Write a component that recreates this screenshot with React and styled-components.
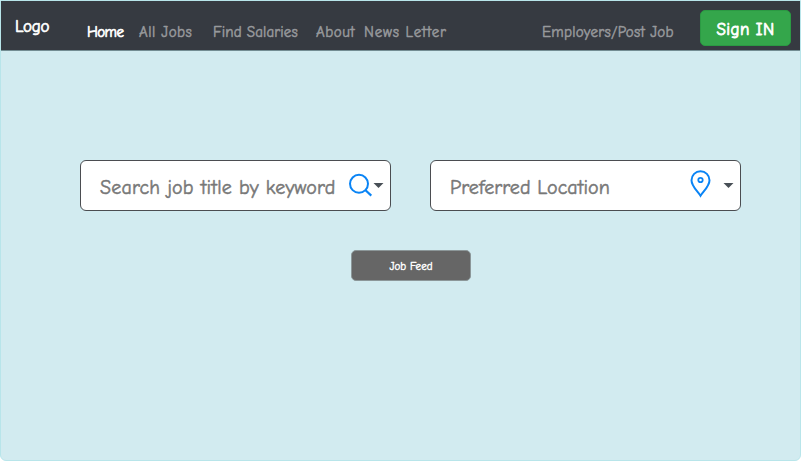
import React from "react";
import styled, { createGlobalStyle } from "styled-components";

const Global = createGlobalStyle`
  * { box-sizing: border-box; }
  body { margin: 0; background: #fff; }
`;

const Page = styled.main`
  width: 801px;
  height: 461px;
  border: 1px solid #b8e5ea;
  border-radius: 0 0 6px 6px;
  background: #d2ebf0;
  font-family: "Comic Neue", "Comic Sans MS", "Open Sans", sans-serif;
  overflow: hidden;
`;

const NavBar = styled.header`
  display: flex;
  align-items: flex-start;
  height: 51px;
  margin-top: -1px;
  border-top: 1px solid #738d93;
  border-bottom: 1px solid #738d93;
  background: #363a41;
`;

const Label = styled.span`
  display: block;
  white-space: nowrap;
  line-height: 20px;
  font-size: ${(p) => p.$size}px;
  font-weight: 400;
  letter-spacing: ${(p) => p.$track || 0}px;
  -webkit-text-stroke: ${(p) => p.$stroke || 0.5}px currentColor;
`;

const Brand = styled(Label)`
  width: 72px;
  margin: 16px 0 0 14px;
  color: #fff;
`;

const NavLinks = styled.nav`
  display: flex;
  flex: 1;
  margin-top: 21px;
`;

const NavLink = styled(Label)`
  width: ${(p) => p.$width}px;
  color: ${(p) => (p.$active ? "#fff" : "#97999c")};
`;

const SignIn = styled.button`
  display: flex;
  justify-content: center;
  width: 91px;
  height: 36px;
  margin: 9px 9px 0 0;
  padding: 9px 0 0;
  border: 1px solid #2b9a43;
  border-radius: 5px;
  background: #34a64b;
  color: #fff;
  font-family: inherit;
`;

const SearchRow = styled.section`
  display: flex;
  gap: 39px;
  margin: 109px 0 0 79px;
`;

const Field = styled.div`
  display: flex;
  width: 311px;
  height: 51px;
  padding-left: 19px;
  border: 1px solid #4b4d51;
  border-radius: 6px;
  background: #fff;
`;

const Placeholder = styled(Label)`
  width: 239px;
  margin-top: 17px;
  color: #777;
`;

const Icon = styled.svg`
  display: block;
  flex: none;
`;

const FeedButton = styled.button`
  display: flex;
  justify-content: center;
  width: 120px;
  height: 31px;
  margin: 39px 0 0 350px;
  padding: 6px 0 0;
  border: 1px solid #8c9799;
  border-radius: 5px;
  background: #666;
  color: #fff;
  font-family: inherit;
`;

const links = [
  { text: "Home", width: 52, active: true, track: -0.6, stroke: 0.7 },
  { text: "All Jobs", width: 74, track: 0.5 },
  { text: "Find Salaries", width: 103, track: 0.1 },
  { text: "About", width: 48, track: 0.5 },
  { text: "News Letter", width: 178, track: 0.8 },
  { text: "Employers/Post Job", width: 140, track: 0.25 },
];

function SearchIcon() {
  return (
    <Icon width="51" height="49" viewBox="9 0 51 49" fill="none">
      <circle cx="29" cy="22.800" r="9" stroke="#0a84f5" strokeWidth="2" />
      <path d="M35 28.800 41.300 34.600" stroke="#0a84f5" strokeWidth="2.200" />
      <path d="M43.500 22h10l-5 5z" fill="#495057" />
    </Icon>
  );
}

function LocationIcon() {
  return (
    <Icon width="51" height="49" viewBox="9 0 51 49" fill="none">
      <path d="M20.500 34.800C17.500 30 11.500 25.200 11.500 19.200a9 9 0 0 1 18 0c0 6-6 10.800-9 15.600Z" stroke="#0a84f5" strokeWidth="2" />
      <circle cx="20.500" cy="19" r="2.200" stroke="#0a84f5" strokeWidth="1.800" />
      <path d="M43.500 22h10l-5 5z" fill="#495057" />
    </Icon>
  );
}

export default function App() {
  return (
    <>
      <Global />
      <Page>
        <NavBar>
          <Brand $size={17} $track={-0.2} $stroke={0.7}>Logo</Brand>
          <NavLinks>
            {links.map((l) => (
              <NavLink key={l.text} $size={15} $width={l.width} $active={l.active} $stroke={l.stroke} $track={l.track}>
                {l.text}
              </NavLink>
            ))}
          </NavLinks>
          <SignIn><Label $size={17} $track={0.4} $stroke={0.8}>Sign IN</Label></SignIn>
        </NavBar>
        <SearchRow>
          <Field>
            <Placeholder $size={20} $track={0.2}>Search job title by keyword</Placeholder>
            <SearchIcon />
          </Field>
          <Field>
            <Placeholder $size={20} $track={0.05}>Preferred Location</Placeholder>
            <LocationIcon />
          </Field>
        </SearchRow>
        <FeedButton><Label $size={11} $stroke={0.4}>Job Feed</Label></FeedButton>
      </Page>
    </>
  );
}
